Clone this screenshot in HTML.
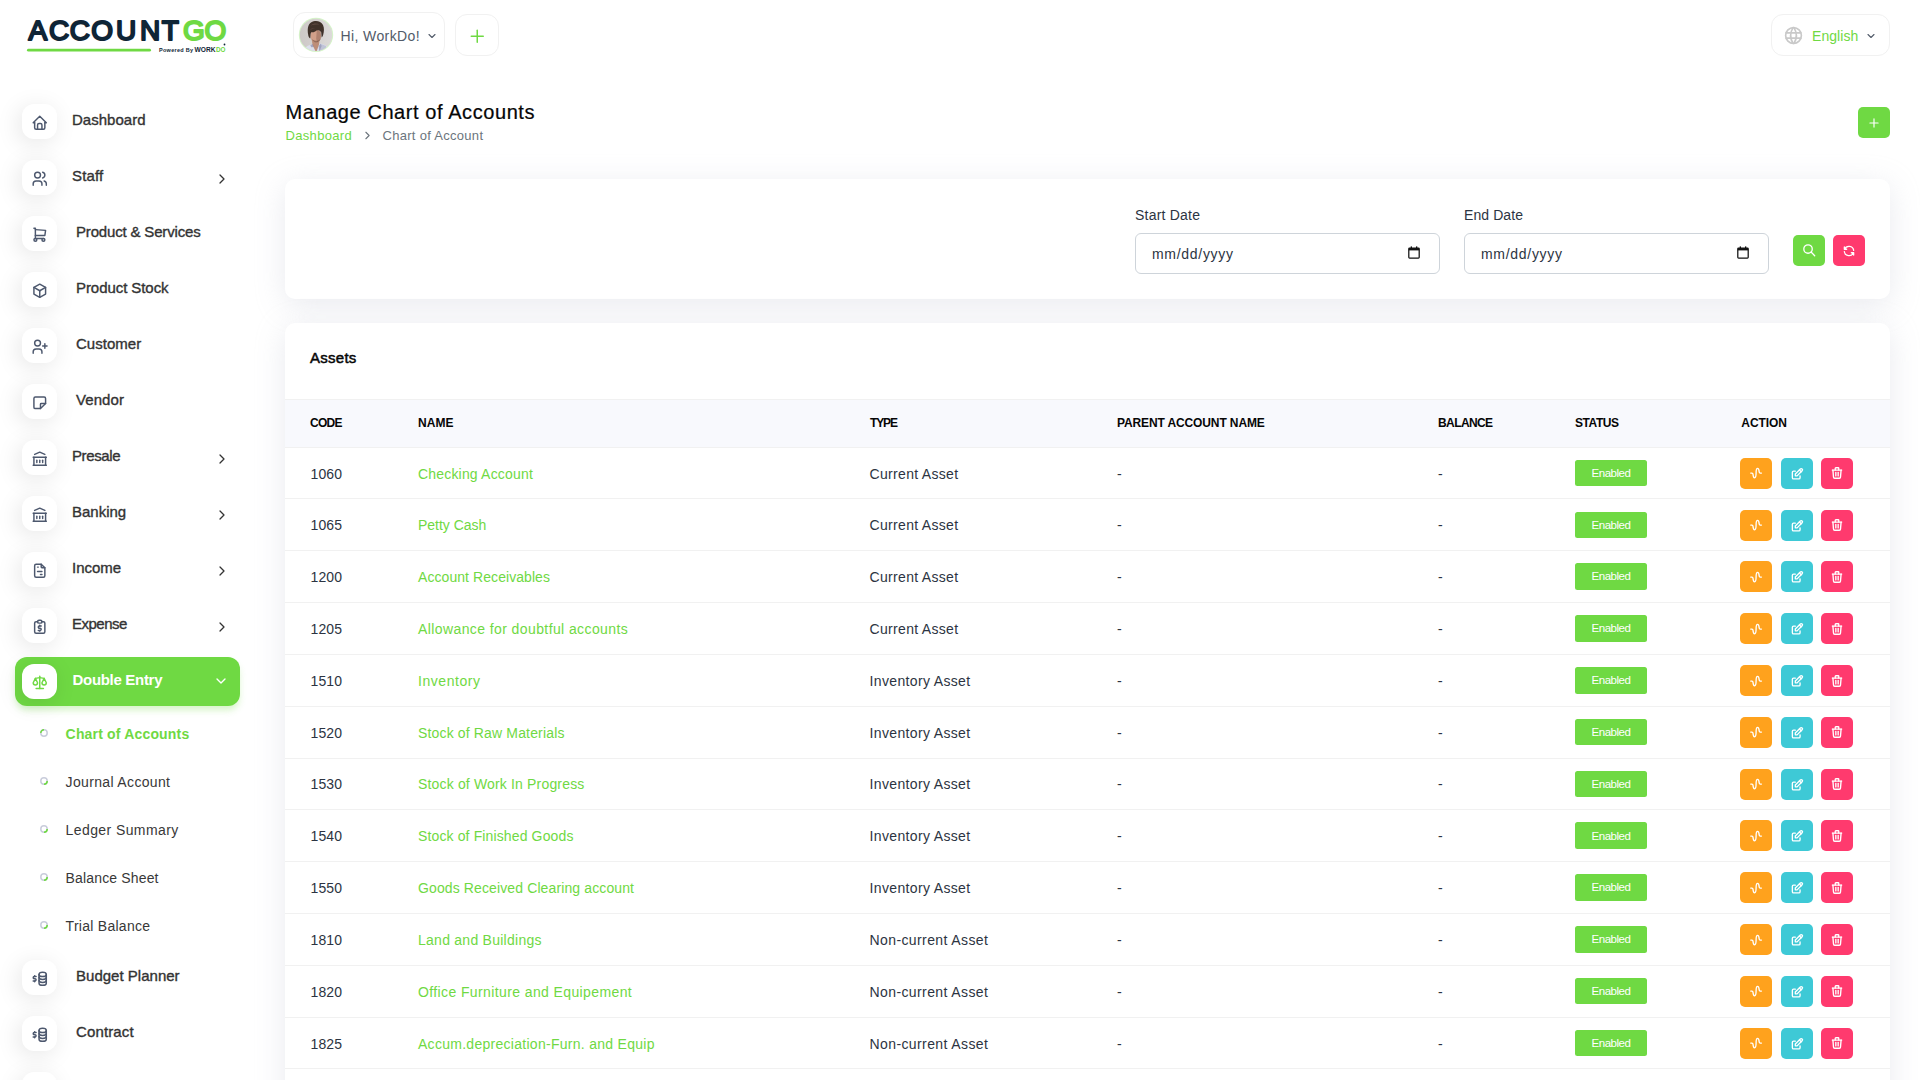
<!DOCTYPE html>
<html lang="en"><head><meta charset="utf-8"><title>Manage Chart of Accounts</title><style>
html,body{margin:0;padding:0}
body{width:1920px;height:1080px;overflow:hidden;background:#fff;font-family:"Liberation Sans",sans-serif;position:relative}
.t{position:absolute;white-space:pre;display:block;margin:0;padding:0;text-decoration:none}
.b{position:absolute;display:block;box-sizing:border-box}
</style></head><body>
<aside>
<svg class="b" style="left:20px;top:10px" width="220" height="50" viewBox="0 0 220 50">
<text x="8.38 29.12 49.78 71.32 95.88 119.93 141.78" y="29.6" font-family="Liberation Sans, sans-serif" font-size="28" fill="#0f2536" stroke="#0f2536" stroke-width="2" stroke-linejoin="round">ACCOUNT</text>
<text x="162.98 184.48" y="29.6" font-family="Liberation Sans, sans-serif" font-size="28" fill="#6fd943" stroke="#6fd943" stroke-width="2" stroke-linejoin="round">GO</text>
<rect x="7" y="38.8" width="124" height="2.8" rx="1.4" fill="#6fd943"/>
<text x="139" y="41.5" font-family="Liberation Sans, sans-serif" font-weight="700" font-size="5.5" fill="#0f2536" textLength="34" lengthAdjust="spacing">Powered By</text>
<text x="174.5" y="41.8" font-family="Liberation Sans, sans-serif" font-weight="700" font-size="7" fill="#0f2536" textLength="21" lengthAdjust="spacingAndGlyphs">WORK</text>
<text x="196" y="41.8" font-family="Liberation Sans, sans-serif" font-weight="700" font-size="7" fill="#6fd943" textLength="9.5" lengthAdjust="spacingAndGlyphs">DO</text>
<circle cx="204.5" cy="34.5" r="0.9" fill="#0f2536"/>
</svg>
<nav>
<div class="b" style="left:22px;top:104px;width:35px;height:35px;background:#fff;border-radius:12px;box-shadow:-3px 4px 23px rgba(0,0,0,.1);"></div>
<svg class="b" style="left:30.85px;top:113.55px" width="17.5" height="17.5" viewBox="0 0 24 24" fill="none" stroke="#4d586e" stroke-width="2" stroke-linecap="round" stroke-linejoin="round"><path d="M5 12l-2 0l9 -9l9 9l-2 0"/><path d="M5 12v7a2 2 0 0 0 2 2h10a2 2 0 0 0 2 -2v-7"/><path d="M9 21v-6a2 2 0 0 1 2 -2h2a2 2 0 0 1 2 2v6"/></svg>
<a class="t" style="left:72.00px;top:108.50px;font-size:15px;line-height:22px;color:#333;letter-spacing:0.026px;-webkit-text-stroke:0.36px #333;">Dashboard</a>
<div class="b" style="left:22px;top:160px;width:35px;height:35px;background:#fff;border-radius:12px;box-shadow:-3px 4px 23px rgba(0,0,0,.1);"></div>
<svg class="b" style="left:30.85px;top:169.55px" width="17.5" height="17.5" viewBox="0 0 24 24" fill="none" stroke="#4d586e" stroke-width="2" stroke-linecap="round" stroke-linejoin="round"><path d="M9 7m-4 0a4 4 0 1 0 8 0a4 4 0 1 0 -8 0"/><path d="M3 21v-2a4 4 0 0 1 4 -4h4a4 4 0 0 1 4 4v2"/><path d="M16 3.13a4 4 0 0 1 0 7.75"/><path d="M21 21v-2a4 4 0 0 0 -3 -3.85"/></svg>
<a class="t" style="left:72.00px;top:164.50px;font-size:15px;line-height:22px;color:#333;letter-spacing:0.177px;-webkit-text-stroke:0.36px #333;">Staff</a>
<svg class="b" style="left:214.00px;top:170.80px" width="16" height="16" viewBox="0 0 24 24" fill="none" stroke="#333" stroke-width="1.9" stroke-linecap="round" stroke-linejoin="round"><path d="M9 6l6 6l-6 6"/></svg>
<div class="b" style="left:22px;top:216px;width:35px;height:35px;background:#fff;border-radius:12px;box-shadow:-3px 4px 23px rgba(0,0,0,.1);"></div>
<svg class="b" style="left:30.85px;top:225.55px" width="17.5" height="17.5" viewBox="0 0 24 24" fill="none" stroke="#4d586e" stroke-width="2" stroke-linecap="round" stroke-linejoin="round"><path d="M6 19m-2 0a2 2 0 1 0 4 0a2 2 0 1 0 -4 0"/><path d="M17 19m-2 0a2 2 0 1 0 4 0a2 2 0 1 0 -4 0"/><path d="M17 17h-11v-14h-2"/><path d="M6 5l14 1l-1 7h-13"/></svg>
<a class="t" style="left:76.00px;top:220.50px;font-size:15px;line-height:22px;color:#333;letter-spacing:-0.168px;-webkit-text-stroke:0.36px #333;">Product &amp; Services</a>
<div class="b" style="left:22px;top:272px;width:35px;height:35px;background:#fff;border-radius:12px;box-shadow:-3px 4px 23px rgba(0,0,0,.1);"></div>
<svg class="b" style="left:30.85px;top:281.55px" width="17.5" height="17.5" viewBox="0 0 24 24" fill="none" stroke="#4d586e" stroke-width="2" stroke-linecap="round" stroke-linejoin="round"><path d="M12 3l8 4.5l0 9l-8 4.5l-8 -4.5l0 -9l8 -4.5"/><path d="M12 12l8 -4.5"/><path d="M12 12l0 9"/><path d="M12 12l-8 -4.5"/></svg>
<a class="t" style="left:76.00px;top:276.50px;font-size:15px;line-height:22px;color:#333;letter-spacing:-0.066px;-webkit-text-stroke:0.36px #333;">Product Stock</a>
<div class="b" style="left:22px;top:328px;width:35px;height:35px;background:#fff;border-radius:12px;box-shadow:-3px 4px 23px rgba(0,0,0,.1);"></div>
<svg class="b" style="left:30.85px;top:337.55px" width="17.5" height="17.5" viewBox="0 0 24 24" fill="none" stroke="#4d586e" stroke-width="2" stroke-linecap="round" stroke-linejoin="round"><path d="M9 7m-4 0a4 4 0 1 0 8 0a4 4 0 1 0 -8 0"/><path d="M3 21v-2a4 4 0 0 1 4 -4h4a4 4 0 0 1 4 4v2"/><path d="M16 11h6m-3 -3v6"/></svg>
<a class="t" style="left:76.00px;top:332.50px;font-size:15px;line-height:22px;color:#333;letter-spacing:0.024px;-webkit-text-stroke:0.36px #333;">Customer</a>
<div class="b" style="left:22px;top:384px;width:35px;height:35px;background:#fff;border-radius:12px;box-shadow:-3px 4px 23px rgba(0,0,0,.1);"></div>
<svg class="b" style="left:30.85px;top:393.55px" width="17.5" height="17.5" viewBox="0 0 24 24" fill="none" stroke="#4d586e" stroke-width="2" stroke-linecap="round" stroke-linejoin="round"><path d="M13 20l7 -7"/><path d="M13 20v-6a1 1 0 0 1 1 -1h6v-7a2 2 0 0 0 -2 -2h-12a2 2 0 0 0 -2 2v12a2 2 0 0 0 2 2h7"/></svg>
<a class="t" style="left:76.00px;top:388.50px;font-size:15px;line-height:22px;color:#333;letter-spacing:0.071px;-webkit-text-stroke:0.36px #333;">Vendor</a>
<div class="b" style="left:22px;top:440px;width:35px;height:35px;background:#fff;border-radius:12px;box-shadow:-3px 4px 23px rgba(0,0,0,.1);"></div>
<svg class="b" style="left:30.85px;top:449.55px" width="17.5" height="17.5" viewBox="0 0 24 24" fill="none" stroke="#4d586e" stroke-width="2" stroke-linecap="round" stroke-linejoin="round"><path d="M3 21l18 0"/><path d="M3 10l18 0"/><path d="M5 6l7 -3l7 3"/><path d="M4 10l0 11"/><path d="M20 10l0 11"/><path d="M8 14l0 3"/><path d="M12 14l0 3"/><path d="M16 14l0 3"/></svg>
<a class="t" style="left:72.00px;top:444.50px;font-size:15px;line-height:22px;color:#333;letter-spacing:-0.393px;-webkit-text-stroke:0.36px #333;">Presale</a>
<svg class="b" style="left:214.00px;top:450.80px" width="16" height="16" viewBox="0 0 24 24" fill="none" stroke="#333" stroke-width="1.9" stroke-linecap="round" stroke-linejoin="round"><path d="M9 6l6 6l-6 6"/></svg>
<div class="b" style="left:22px;top:496px;width:35px;height:35px;background:#fff;border-radius:12px;box-shadow:-3px 4px 23px rgba(0,0,0,.1);"></div>
<svg class="b" style="left:30.85px;top:505.55px" width="17.5" height="17.5" viewBox="0 0 24 24" fill="none" stroke="#4d586e" stroke-width="2" stroke-linecap="round" stroke-linejoin="round"><path d="M3 21l18 0"/><path d="M3 10l18 0"/><path d="M5 6l7 -3l7 3"/><path d="M4 10l0 11"/><path d="M20 10l0 11"/><path d="M8 14l0 3"/><path d="M12 14l0 3"/><path d="M16 14l0 3"/></svg>
<a class="t" style="left:72.00px;top:500.50px;font-size:15px;line-height:22px;color:#333;letter-spacing:-0.003px;-webkit-text-stroke:0.36px #333;">Banking</a>
<svg class="b" style="left:214.00px;top:506.80px" width="16" height="16" viewBox="0 0 24 24" fill="none" stroke="#333" stroke-width="1.9" stroke-linecap="round" stroke-linejoin="round"><path d="M9 6l6 6l-6 6"/></svg>
<div class="b" style="left:22px;top:552px;width:35px;height:35px;background:#fff;border-radius:12px;box-shadow:-3px 4px 23px rgba(0,0,0,.1);"></div>
<svg class="b" style="left:30.85px;top:561.55px" width="17.5" height="17.5" viewBox="0 0 24 24" fill="none" stroke="#4d586e" stroke-width="2" stroke-linecap="round" stroke-linejoin="round"><path d="M14 3v4a1 1 0 0 0 1 1h4"/><path d="M17 21h-10a2 2 0 0 1 -2 -2v-14a2 2 0 0 1 2 -2h7l5 5v11a2 2 0 0 1 -2 2z"/><path d="M9 7l1 0"/><path d="M9 13l6 0"/><path d="M13 17l2 0"/></svg>
<a class="t" style="left:72.00px;top:556.50px;font-size:15px;line-height:22px;color:#333;letter-spacing:-0.021px;-webkit-text-stroke:0.36px #333;">Income</a>
<svg class="b" style="left:214.00px;top:562.80px" width="16" height="16" viewBox="0 0 24 24" fill="none" stroke="#333" stroke-width="1.9" stroke-linecap="round" stroke-linejoin="round"><path d="M9 6l6 6l-6 6"/></svg>
<div class="b" style="left:22px;top:608px;width:35px;height:35px;background:#fff;border-radius:12px;box-shadow:-3px 4px 23px rgba(0,0,0,.1);"></div>
<svg class="b" style="left:30.85px;top:617.55px" width="17.5" height="17.5" viewBox="0 0 24 24" fill="none" stroke="#4d586e" stroke-width="2" stroke-linecap="round" stroke-linejoin="round"><path d="M9 5h-2a2 2 0 0 0 -2 2v12a2 2 0 0 0 2 2h10a2 2 0 0 0 2 -2v-12a2 2 0 0 0 -2 -2h-2"/><path d="M9 5a2 2 0 0 1 2 -2h2a2 2 0 0 1 2 2a2 2 0 0 1 -2 2h-2a2 2 0 0 1 -2 -2z"/><path d="M14 11h-2.5a1.5 1.5 0 0 0 0 3h1a1.5 1.5 0 0 1 0 3h-2.5"/><path d="M12 17v1m0 -8v1"/></svg>
<a class="t" style="left:72.00px;top:612.50px;font-size:15px;line-height:22px;color:#333;letter-spacing:-0.496px;-webkit-text-stroke:0.36px #333;">Expense</a>
<svg class="b" style="left:214.00px;top:618.80px" width="16" height="16" viewBox="0 0 24 24" fill="none" stroke="#333" stroke-width="1.9" stroke-linecap="round" stroke-linejoin="round"><path d="M9 6l6 6l-6 6"/></svg>
<div class="b" style="left:15px;top:657px;width:225px;height:49px;background:#6fd943;border-radius:12px;box-shadow:0 5px 7px -1px rgba(111,217,67,.3);"></div>
<div class="b" style="left:22px;top:664px;width:35px;height:35px;background:#fff;border-radius:12px;box-shadow:-3px 4px 23px rgba(0,0,0,.1);"></div>
<svg class="b" style="left:30.85px;top:673.55px" width="17.5" height="17.5" viewBox="0 0 24 24" fill="none" stroke="#6fd943" stroke-width="2" stroke-linecap="round" stroke-linejoin="round"><path d="M7 20l10 0"/><path d="M6 6l6 -1l6 1"/><path d="M12 3l0 17"/><path d="M9 12l-3 -6l-3 6a3 3 0 0 0 6 0"/><path d="M21 12l-3 -6l-3 6a3 3 0 0 0 6 0"/></svg>
<a class="t" style="left:72.50px;top:668.50px;font-size:15px;line-height:22px;color:#fff;font-weight:700;letter-spacing:-0.304px;">Double Entry</a>
<svg class="b" style="left:212.50px;top:673.30px" width="16" height="16" viewBox="0 0 24 24" fill="none" stroke="#fff" stroke-width="2" stroke-linecap="round" stroke-linejoin="round"><path d="M6 9l6 6l6 -6"/></svg>
<svg class="b" style="left:39px;top:728px" width="10" height="10" viewBox="0 0 10 10" fill="none"><circle cx="5" cy="5" r="3.2" stroke="#c9cddb" stroke-width="1.5"/><path d="M1.8 5a3.2 3.2 0 0 1 3.2 -3.2" stroke="#6fd943" stroke-width="1.5"/></svg>
<a class="t" style="left:65.60px;top:723.50px;font-size:14px;line-height:21px;color:#6fd943;font-weight:700;letter-spacing:0.173px;">Chart of Accounts</a>
<svg class="b" style="left:39px;top:776px" width="10" height="10" viewBox="0 0 10 10" fill="none"><circle cx="5" cy="5" r="3.2" stroke="#c9cddb" stroke-width="1.5"/><path d="M8.200 5a3.200 3.200 0 0 1 -3.200 3.200" stroke="#6fd943" stroke-width="1.5"/></svg>
<a class="t" style="left:65.60px;top:771.50px;font-size:14px;line-height:21px;color:#383838;letter-spacing:0.341px;">Journal Account</a>
<svg class="b" style="left:39px;top:824px" width="10" height="10" viewBox="0 0 10 10" fill="none"><circle cx="5" cy="5" r="3.2" stroke="#c9cddb" stroke-width="1.5"/><path d="M8.200 5a3.200 3.200 0 0 1 -3.200 3.200" stroke="#6fd943" stroke-width="1.5"/></svg>
<a class="t" style="left:65.60px;top:819.50px;font-size:14px;line-height:21px;color:#383838;letter-spacing:0.408px;">Ledger Summary</a>
<svg class="b" style="left:39px;top:872px" width="10" height="10" viewBox="0 0 10 10" fill="none"><circle cx="5" cy="5" r="3.2" stroke="#c9cddb" stroke-width="1.5"/><path d="M8.200 5a3.200 3.200 0 0 1 -3.200 3.200" stroke="#6fd943" stroke-width="1.5"/></svg>
<a class="t" style="left:65.60px;top:867.50px;font-size:14px;line-height:21px;color:#383838;letter-spacing:0.152px;">Balance Sheet</a>
<svg class="b" style="left:39px;top:920px" width="10" height="10" viewBox="0 0 10 10" fill="none"><circle cx="5" cy="5" r="3.2" stroke="#c9cddb" stroke-width="1.5"/><path d="M8.200 5a3.200 3.200 0 0 1 -3.200 3.200" stroke="#6fd943" stroke-width="1.5"/></svg>
<a class="t" style="left:65.60px;top:915.50px;font-size:14px;line-height:21px;color:#383838;letter-spacing:0.268px;">Trial Balance</a>
<div class="b" style="left:22px;top:960px;width:35px;height:35px;background:#fff;border-radius:12px;box-shadow:-3px 4px 23px rgba(0,0,0,.1);"></div>
<svg class="b" style="left:30.85px;top:969.55px" width="17.5" height="17.5" viewBox="0 0 24 24" fill="none" stroke="#4d586e" stroke-width="2" stroke-linecap="round" stroke-linejoin="round"><path d="M16 6m-5 0a5 3 0 1 0 10 0a5 3 0 1 0 -10 0"/><path d="M11 6v4c0 1.657 2.239 3 5 3s5 -1.343 5 -3v-4"/><path d="M11 10v4c0 1.657 2.239 3 5 3s5 -1.343 5 -3v-4"/><path d="M11 14v4c0 1.657 2.239 3 5 3s5 -1.343 5 -3v-4"/><path d="M7 9h-2.5a1.5 1.5 0 0 0 0 3h1a1.5 1.5 0 0 1 0 3h-2.5"/><path d="M5 15v1m0 -8v1"/></svg>
<a class="t" style="left:76.00px;top:964.50px;font-size:15px;line-height:22px;color:#333;letter-spacing:0.014px;-webkit-text-stroke:0.36px #333;">Budget Planner</a>
<div class="b" style="left:22px;top:1016px;width:35px;height:35px;background:#fff;border-radius:12px;box-shadow:-3px 4px 23px rgba(0,0,0,.1);"></div>
<svg class="b" style="left:30.85px;top:1025.55px" width="17.5" height="17.5" viewBox="0 0 24 24" fill="none" stroke="#4d586e" stroke-width="2" stroke-linecap="round" stroke-linejoin="round"><path d="M16 6m-5 0a5 3 0 1 0 10 0a5 3 0 1 0 -10 0"/><path d="M11 6v4c0 1.657 2.239 3 5 3s5 -1.343 5 -3v-4"/><path d="M11 10v4c0 1.657 2.239 3 5 3s5 -1.343 5 -3v-4"/><path d="M11 14v4c0 1.657 2.239 3 5 3s5 -1.343 5 -3v-4"/><path d="M7 9h-2.5a1.5 1.5 0 0 0 0 3h1a1.5 1.5 0 0 1 0 3h-2.5"/><path d="M5 15v1m0 -8v1"/></svg>
<a class="t" style="left:76.00px;top:1020.50px;font-size:15px;line-height:22px;color:#333;letter-spacing:0.128px;-webkit-text-stroke:0.36px #333;">Contract</a>
<div class="b" style="left:22px;top:1072px;width:35px;height:35px;background:#fff;border-radius:12px;box-shadow:-3px 4px 23px rgba(0,0,0,.1);"></div>
</nav></aside>
<header>
<div class="b" style="left:293px;top:12px;width:152px;height:46px;border:1px solid #f1f1f1;border-radius:12px;background:#fff"></div>
<svg class="b" style="left:296px;top:15px" width="40" height="40" viewBox="296 15 40 40">
<defs><clipPath id="av"><circle cx="316" cy="34.9" r="16.2"/></clipPath><filter id="bl" x="-20%" y="-20%" width="140%" height="140%"><feGaussianBlur stdDeviation="0.6"/></filter>
<linearGradient id="abg" x1="0" x2="1" y1="0" y2="0"><stop offset="0" stop-color="#cbc6c4"/><stop offset="1" stop-color="#dedcdb"/></linearGradient></defs>
<circle cx="316" cy="34.9" r="17.2" fill="#d5f4c8"/>
<g clip-path="url(#av)"><rect x="296" y="15" width="40" height="40" fill="url(#abg)"/>
<g filter="url(#bl)">
<path d="M302 52C304 47 308.500 45.200 312 44.200L315.800 52 319.800 43.200C324 44.200 329 46.500 331 52L331 56 302 56Z" fill="#dcdfec"/>
<path d="M321 44L326 46 327 53 320 53Z" fill="#b4b8cf" opacity=".7"/>
<path d="M311.800 40L319.600 40 319 44.500 316.200 52.500 312.600 45Z" fill="#bd8d78"/>
<path d="M310.300 45.200L312.600 44 313.800 47 311.300 47.300Z M318.700 46L320.600 43.600 321.500 46 319.300 53Z" fill="#6f729c" opacity=".5"/>
<ellipse cx="315.700" cy="35.800" rx="5.300" ry="6.500" fill="#d2a08a"/>
<path d="M316.800 29.500L321.200 31 320.800 39 317.300 42.300 316.200 39Z" fill="#94695a" opacity=".55"/>
<path d="M311.300 38.500C312.500 41.500 315 42.800 317.300 42.300 319 41.600 320.300 40 320.800 38.500 319.500 40.300 317.500 41 315.800 40.800 314 40.600 312.300 39.800 311.300 38.500Z" fill="#7d5848" opacity=".7"/>
<path d="M308.300 35.500C306.800 28 308.300 22.500 313.500 21.300 317 20.300 321.200 21.300 323 25 324.500 28 324 32 323.200 34.800 322.800 36.300 322.300 37 321.600 37.500L321.200 32.200C319.800 30.300 318.200 29.800 316.500 30.600 315 32.300 312.800 32.600 311.300 32.200 310.800 33 310.500 34 310.500 35L310.300 38.600C309.200 37.800 308.600 36.800 308.300 35.500Z" fill="#41322c"/>
<path d="M311 25.500C313 23.300 317 23 319.500 24.500 317.500 24.300 314 24.500 311 25.500Z M310 30C311 28.500 313 27.800 315 28 313 28.600 311.300 29.300 310 30Z" fill="#6a5347" opacity=".7"/>
</g></g></svg>
<span class="t" style="left:340.60px;top:25.50px;font-size:14px;line-height:21px;color:#525b69;letter-spacing:0.380px;">Hi, WorkDo!</span>
<svg class="b" style="left:426.00px;top:29.70px" width="12" height="12" viewBox="0 0 24 24" fill="none" stroke="#525b69" stroke-width="2.2" stroke-linecap="round" stroke-linejoin="round"><path d="M6 9l6 6l6 -6"/></svg>
<div class="b" style="left:455px;top:14px;width:43.5px;height:41.5px;border:1px solid #f1f1f1;border-radius:12px;background:#fff"></div>
<svg class="b" style="left:466.85px;top:25.55px" width="20.5" height="20.5" viewBox="0 0 24 24" fill="none" stroke="#6fd943" stroke-width="1.75" stroke-linecap="round" stroke-linejoin="round"><path d="M12 5l0 14"/><path d="M5 12l14 0"/></svg>
<div class="b" style="left:1771px;top:14px;width:119px;height:41.5px;border:1px solid #f1f1f1;border-radius:12px;background:#fff"></div>
<svg class="b" style="left:1782.90px;top:25.30px" width="21" height="21" viewBox="0 0 24 24" fill="none" stroke="#c9c9c9" stroke-width="1.9" stroke-linecap="round" stroke-linejoin="round"><path d="M3 12a9 9 0 1 0 18 0a9 9 0 0 0 -18 0"/><path d="M3.6 9h16.8"/><path d="M3.6 15h16.8"/><path d="M11.5 3a17 17 0 0 0 0 18"/><path d="M12.5 3a17 17 0 0 1 0 18"/></svg>
<span class="t" style="left:1812.00px;top:25.50px;font-size:14px;line-height:21px;color:#6fd943;letter-spacing:0.063px;">English</span>
<svg class="b" style="left:1865.00px;top:29.50px" width="12" height="12" viewBox="0 0 24 24" fill="none" stroke="#525b69" stroke-width="2.2" stroke-linecap="round" stroke-linejoin="round"><path d="M6 9l6 6l6 -6"/></svg>
</header>
<main>
<h4 class="t" style="left:285.50px;top:97.00px;font-size:20px;line-height:30px;color:#060606;font-weight:400;letter-spacing:0.578px;-webkit-text-stroke:0.22px #060606;">Manage Chart of Accounts</h4>
<a class="t" style="left:285.50px;top:125.50px;font-size:13px;line-height:20px;color:#6fd943;letter-spacing:0.324px;">Dashboard</a>
<svg class="b" style="left:360.70px;top:129.10px" width="13" height="13" viewBox="0 0 24 24" fill="none" stroke="#6c757d" stroke-width="2.1" stroke-linecap="round" stroke-linejoin="round"><path d="M9 6l6 6l-6 6"/></svg>
<span class="t" style="left:382.50px;top:125.50px;font-size:13px;line-height:20px;color:#6c757d;letter-spacing:0.292px;">Chart of Account</span>
<div class="b" style="left:1858px;top:107px;width:32px;height:31px;background:#6fd943;border-radius:5px"></div>
<svg class="b" style="left:1867.00px;top:115.60px" width="14" height="14" viewBox="0 0 24 24" fill="none" stroke="#fff" stroke-width="2" stroke-linecap="round" stroke-linejoin="round"><path d="M12 5l0 14"/><path d="M5 12l14 0"/></svg>
<section>
<div class="b" style="left:285px;top:179px;width:1605px;height:120px;background:#fff;border-radius:10px;box-shadow:0 6px 30px rgba(182,186,203,.3);"></div>
<label class="t" style="left:1135.00px;top:204.50px;font-size:14px;line-height:21px;color:#2c3442;letter-spacing:0.219px;">Start Date</label>
<div class="b" style="left:1135px;top:233px;width:305px;height:40.5px;border:1px solid #ced4da;border-radius:6px;background:#fff"></div>
<span class="t" style="left:1152.00px;top:243.50px;font-size:14px;line-height:21px;color:#2c3442;letter-spacing:0.701px;">mm/dd/yyyy</span>
<label class="t" style="left:1464.00px;top:204.50px;font-size:14px;line-height:21px;color:#2c3442;letter-spacing:0.089px;">End Date</label>
<div class="b" style="left:1464px;top:233px;width:305px;height:40.5px;border:1px solid #ced4da;border-radius:6px;background:#fff"></div>
<span class="t" style="left:1481.00px;top:243.50px;font-size:14px;line-height:21px;color:#2c3442;letter-spacing:0.701px;">mm/dd/yyyy</span>
<svg class="b" style="left:1408px;top:245.7px" width="12" height="13" viewBox="0 0 12 13"><rect x="0.8" y="2.1" width="10.4" height="10" rx="0.8" fill="none" stroke="#111" stroke-width="1.25"/><rect x="0.8" y="2.1" width="10.4" height="2.3" fill="#111"/><rect x="2.7" y="0.4" width="1.3" height="2.2" fill="#111"/><rect x="8" y="0.4" width="1.3" height="2.2" fill="#111"/></svg>
<svg class="b" style="left:1737px;top:245.7px" width="12" height="13" viewBox="0 0 12 13"><rect x="0.8" y="2.1" width="10.4" height="10" rx="0.8" fill="none" stroke="#111" stroke-width="1.25"/><rect x="0.8" y="2.1" width="10.4" height="2.3" fill="#111"/><rect x="2.7" y="0.4" width="1.3" height="2.2" fill="#111"/><rect x="8" y="0.4" width="1.3" height="2.2" fill="#111"/></svg>
<div class="b" style="left:1793px;top:235px;width:32px;height:30.5px;background:#6fd943;border-radius:5px"></div>
<svg class="b" style="left:1801.95px;top:243.25px" width="14.5" height="14.5" viewBox="0 0 24 24" fill="none" stroke="#fff" stroke-width="2.2" stroke-linecap="round" stroke-linejoin="round"><path d="M10 10m-7 0a7 7 0 1 0 14 0a7 7 0 1 0 -14 0"/><path d="M21 21l-6 -6"/></svg>
<div class="b" style="left:1833px;top:235px;width:32px;height:30.5px;background:#ff3a6e;border-radius:5px"></div>
<svg class="b" style="left:1842.00px;top:243.50px" width="14" height="14" viewBox="0 0 24 24" fill="none" stroke="#fff" stroke-width="2.2" stroke-linecap="round" stroke-linejoin="round"><path d="M20 11a8.1 8.1 0 0 0 -15.5 -2m-.5 -4v4h4"/><path d="M4 13a8.1 8.1 0 0 0 15.5 2m.5 4v-4h-4"/></svg>
</section>
<section>
<div class="b" style="left:285px;top:323px;width:1605px;height:800px;background:#fff;border-radius:10px 10px 0 0;box-shadow:0 6px 30px rgba(182,186,203,.3);"></div>
<h5 class="t" style="left:310.00px;top:346.50px;font-size:15px;line-height:22px;color:#060606;font-weight:400;letter-spacing:0.257px;-webkit-text-stroke:0.5px #060606;">Assets</h5>
<div class="b" style="left:285px;top:398.5px;width:1605px;height:49.5px;background:#f8f9fd;border-top:1px solid #f1f1f1;border-bottom:1px solid #f1f1f1"></div>
<span class="t" style="left:310.00px;top:414.00px;font-size:12px;line-height:18px;color:#060606;font-weight:700;letter-spacing:-0.724px;">CODE</span>
<span class="t" style="left:418.00px;top:414.00px;font-size:12px;line-height:18px;color:#060606;font-weight:700;letter-spacing:0.052px;">NAME</span>
<span class="t" style="left:870.00px;top:414.00px;font-size:12px;line-height:18px;color:#060606;font-weight:700;letter-spacing:-1.115px;">TYPE</span>
<span class="t" style="left:1117.00px;top:414.00px;font-size:12px;line-height:18px;color:#060606;font-weight:700;letter-spacing:-0.122px;">PARENT ACCOUNT NAME</span>
<span class="t" style="left:1438.00px;top:414.00px;font-size:12px;line-height:18px;color:#060606;font-weight:700;letter-spacing:-0.595px;">BALANCE</span>
<span class="t" style="left:1575.00px;top:414.00px;font-size:12px;line-height:18px;color:#060606;font-weight:700;letter-spacing:-0.444px;">STATUS</span>
<span class="t" style="left:1741.30px;top:414.00px;font-size:12px;line-height:18px;color:#060606;font-weight:700;letter-spacing:-0.060px;">ACTION</span>
<span class="t" style="left:310.50px;top:463.50px;font-size:14px;line-height:21px;color:#2c3442;letter-spacing:0.115px;">1060</span>
<a class="t" style="left:418.00px;top:463.50px;font-size:14px;line-height:21px;color:#6fd943;letter-spacing:0.181px;">Checking Account</a>
<span class="t" style="left:869.60px;top:463.50px;font-size:14px;line-height:21px;color:#2c3442;letter-spacing:0.306px;">Current Asset</span>
<span class="t" style="left:1117.00px;top:463.50px;font-size:14px;line-height:21px;color:#2c3442;">-</span>
<span class="t" style="left:1438.00px;top:463.50px;font-size:14px;line-height:21px;color:#2c3442;">-</span>
<div class="b" style="left:1575px;top:459.8px;width:72px;height:26.5px;background:#6fd943;border-radius:2.5px"></div>
<span class="t" style="left:1591.50px;top:464.50px;font-size:11.5px;line-height:17px;color:#fff;letter-spacing:-0.470px;">Enabled</span>
<div class="b" style="left:1740px;top:457.5px;width:32px;height:31px;background:#ffa21d;border-radius:5px"></div>
<svg class="b" style="left:1748.80px;top:466.10px" width="14.2" height="14.2" viewBox="0 0 24 24" fill="none" stroke="#fff" stroke-width="2.3" stroke-linecap="round" stroke-linejoin="round"><path d="M21 12h-2c-.894 0 -1.662 -.857 -1.761 -2c-.296 -3.45 -.749 -6 -2.749 -6s-2.5 3.582 -2.5 8s-.5 8 -2.5 8s-2.452 -2.547 -2.749 -6c-.1 -1.147 -.867 -2 -1.763 -2h-2"/></svg>
<div class="b" style="left:1781px;top:457.5px;width:32px;height:31px;background:#3ec9d6;border-radius:5px"></div>
<svg class="b" style="left:1789.90px;top:466.50px" width="14.2" height="14.2" viewBox="0 0 24 24" fill="none" stroke="#fff" stroke-width="2.3" stroke-linecap="round" stroke-linejoin="round"><path d="M9 7h-3a2 2 0 0 0 -2 2v9a2 2 0 0 0 2 2h9a2 2 0 0 0 2 -2v-3"/><path d="M9 15h3l8.5 -8.5a1.5 1.5 0 0 0 -3 -3l-8.5 8.5v3"/><path d="M16 5l3 3"/></svg>
<div class="b" style="left:1821px;top:457.5px;width:32px;height:31px;background:#ff3a6e;border-radius:5px"></div>
<svg class="b" style="left:1830.30px;top:466.30px" width="14" height="14" viewBox="0 0 24 24" fill="none" stroke="#fff" stroke-width="2.3" stroke-linecap="round" stroke-linejoin="round"><path d="M4 7l16 0"/><path d="M10 11l0 6"/><path d="M14 11l0 6"/><path d="M5 7l1 12a2 2 0 0 0 2 2h8a2 2 0 0 0 2 -2l1 -12"/><path d="M9 7v-3a1 1 0 0 1 1 -1h4a1 1 0 0 1 1 1v3"/></svg>
<div class="b" style="left:285px;top:498px;width:1605px;height:1px;background:#f1f1f1"></div>
<span class="t" style="left:310.50px;top:514.50px;font-size:14px;line-height:21px;color:#2c3442;letter-spacing:0.115px;">1065</span>
<a class="t" style="left:418.00px;top:514.50px;font-size:14px;line-height:21px;color:#6fd943;letter-spacing:-0.009px;">Petty Cash</a>
<span class="t" style="left:869.60px;top:514.50px;font-size:14px;line-height:21px;color:#2c3442;letter-spacing:0.306px;">Current Asset</span>
<span class="t" style="left:1117.00px;top:514.50px;font-size:14px;line-height:21px;color:#2c3442;">-</span>
<span class="t" style="left:1438.00px;top:514.50px;font-size:14px;line-height:21px;color:#2c3442;">-</span>
<div class="b" style="left:1575px;top:511.6px;width:72px;height:26.5px;background:#6fd943;border-radius:2.5px"></div>
<span class="t" style="left:1591.50px;top:516.50px;font-size:11.5px;line-height:17px;color:#fff;letter-spacing:-0.470px;">Enabled</span>
<div class="b" style="left:1740px;top:509.5px;width:32px;height:31px;background:#ffa21d;border-radius:5px"></div>
<svg class="b" style="left:1748.80px;top:518.10px" width="14.2" height="14.2" viewBox="0 0 24 24" fill="none" stroke="#fff" stroke-width="2.3" stroke-linecap="round" stroke-linejoin="round"><path d="M21 12h-2c-.894 0 -1.662 -.857 -1.761 -2c-.296 -3.45 -.749 -6 -2.749 -6s-2.5 3.582 -2.5 8s-.5 8 -2.5 8s-2.452 -2.547 -2.749 -6c-.1 -1.147 -.867 -2 -1.763 -2h-2"/></svg>
<div class="b" style="left:1781px;top:509.5px;width:32px;height:31px;background:#3ec9d6;border-radius:5px"></div>
<svg class="b" style="left:1789.90px;top:518.50px" width="14.2" height="14.2" viewBox="0 0 24 24" fill="none" stroke="#fff" stroke-width="2.3" stroke-linecap="round" stroke-linejoin="round"><path d="M9 7h-3a2 2 0 0 0 -2 2v9a2 2 0 0 0 2 2h9a2 2 0 0 0 2 -2v-3"/><path d="M9 15h3l8.5 -8.5a1.5 1.5 0 0 0 -3 -3l-8.5 8.5v3"/><path d="M16 5l3 3"/></svg>
<div class="b" style="left:1821px;top:509.5px;width:32px;height:31px;background:#ff3a6e;border-radius:5px"></div>
<svg class="b" style="left:1830.30px;top:518.30px" width="14" height="14" viewBox="0 0 24 24" fill="none" stroke="#fff" stroke-width="2.3" stroke-linecap="round" stroke-linejoin="round"><path d="M4 7l16 0"/><path d="M10 11l0 6"/><path d="M14 11l0 6"/><path d="M5 7l1 12a2 2 0 0 0 2 2h8a2 2 0 0 0 2 -2l1 -12"/><path d="M9 7v-3a1 1 0 0 1 1 -1h4a1 1 0 0 1 1 1v3"/></svg>
<div class="b" style="left:285px;top:550px;width:1605px;height:1px;background:#f1f1f1"></div>
<span class="t" style="left:310.50px;top:566.50px;font-size:14px;line-height:21px;color:#2c3442;letter-spacing:0.115px;">1200</span>
<a class="t" style="left:418.00px;top:566.50px;font-size:14px;line-height:21px;color:#6fd943;letter-spacing:0.069px;">Account Receivables</a>
<span class="t" style="left:869.60px;top:566.50px;font-size:14px;line-height:21px;color:#2c3442;letter-spacing:0.306px;">Current Asset</span>
<span class="t" style="left:1117.00px;top:566.50px;font-size:14px;line-height:21px;color:#2c3442;">-</span>
<span class="t" style="left:1438.00px;top:566.50px;font-size:14px;line-height:21px;color:#2c3442;">-</span>
<div class="b" style="left:1575px;top:563.4px;width:72px;height:26.5px;background:#6fd943;border-radius:2.5px"></div>
<span class="t" style="left:1591.50px;top:567.50px;font-size:11.5px;line-height:17px;color:#fff;letter-spacing:-0.470px;">Enabled</span>
<div class="b" style="left:1740px;top:561.0px;width:32px;height:31px;background:#ffa21d;border-radius:5px"></div>
<svg class="b" style="left:1748.80px;top:569.60px" width="14.2" height="14.2" viewBox="0 0 24 24" fill="none" stroke="#fff" stroke-width="2.3" stroke-linecap="round" stroke-linejoin="round"><path d="M21 12h-2c-.894 0 -1.662 -.857 -1.761 -2c-.296 -3.45 -.749 -6 -2.749 -6s-2.5 3.582 -2.5 8s-.5 8 -2.5 8s-2.452 -2.547 -2.749 -6c-.1 -1.147 -.867 -2 -1.763 -2h-2"/></svg>
<div class="b" style="left:1781px;top:561.0px;width:32px;height:31px;background:#3ec9d6;border-radius:5px"></div>
<svg class="b" style="left:1789.90px;top:570.00px" width="14.2" height="14.2" viewBox="0 0 24 24" fill="none" stroke="#fff" stroke-width="2.3" stroke-linecap="round" stroke-linejoin="round"><path d="M9 7h-3a2 2 0 0 0 -2 2v9a2 2 0 0 0 2 2h9a2 2 0 0 0 2 -2v-3"/><path d="M9 15h3l8.5 -8.5a1.5 1.5 0 0 0 -3 -3l-8.5 8.5v3"/><path d="M16 5l3 3"/></svg>
<div class="b" style="left:1821px;top:561.0px;width:32px;height:31px;background:#ff3a6e;border-radius:5px"></div>
<svg class="b" style="left:1830.30px;top:569.80px" width="14" height="14" viewBox="0 0 24 24" fill="none" stroke="#fff" stroke-width="2.3" stroke-linecap="round" stroke-linejoin="round"><path d="M4 7l16 0"/><path d="M10 11l0 6"/><path d="M14 11l0 6"/><path d="M5 7l1 12a2 2 0 0 0 2 2h8a2 2 0 0 0 2 -2l1 -12"/><path d="M9 7v-3a1 1 0 0 1 1 -1h4a1 1 0 0 1 1 1v3"/></svg>
<div class="b" style="left:285px;top:602px;width:1605px;height:1px;background:#f1f1f1"></div>
<span class="t" style="left:310.50px;top:618.50px;font-size:14px;line-height:21px;color:#2c3442;letter-spacing:0.115px;">1205</span>
<a class="t" style="left:418.00px;top:618.50px;font-size:14px;line-height:21px;color:#6fd943;letter-spacing:0.404px;">Allowance for doubtful accounts</a>
<span class="t" style="left:869.60px;top:618.50px;font-size:14px;line-height:21px;color:#2c3442;letter-spacing:0.306px;">Current Asset</span>
<span class="t" style="left:1117.00px;top:618.50px;font-size:14px;line-height:21px;color:#2c3442;">-</span>
<span class="t" style="left:1438.00px;top:618.50px;font-size:14px;line-height:21px;color:#2c3442;">-</span>
<div class="b" style="left:1575px;top:615.2px;width:72px;height:26.5px;background:#6fd943;border-radius:2.5px"></div>
<span class="t" style="left:1591.50px;top:619.50px;font-size:11.5px;line-height:17px;color:#fff;letter-spacing:-0.470px;">Enabled</span>
<div class="b" style="left:1740px;top:613.0px;width:32px;height:31px;background:#ffa21d;border-radius:5px"></div>
<svg class="b" style="left:1748.80px;top:621.60px" width="14.2" height="14.2" viewBox="0 0 24 24" fill="none" stroke="#fff" stroke-width="2.3" stroke-linecap="round" stroke-linejoin="round"><path d="M21 12h-2c-.894 0 -1.662 -.857 -1.761 -2c-.296 -3.45 -.749 -6 -2.749 -6s-2.5 3.582 -2.5 8s-.5 8 -2.5 8s-2.452 -2.547 -2.749 -6c-.1 -1.147 -.867 -2 -1.763 -2h-2"/></svg>
<div class="b" style="left:1781px;top:613.0px;width:32px;height:31px;background:#3ec9d6;border-radius:5px"></div>
<svg class="b" style="left:1789.90px;top:622.00px" width="14.2" height="14.2" viewBox="0 0 24 24" fill="none" stroke="#fff" stroke-width="2.3" stroke-linecap="round" stroke-linejoin="round"><path d="M9 7h-3a2 2 0 0 0 -2 2v9a2 2 0 0 0 2 2h9a2 2 0 0 0 2 -2v-3"/><path d="M9 15h3l8.5 -8.5a1.5 1.5 0 0 0 -3 -3l-8.5 8.5v3"/><path d="M16 5l3 3"/></svg>
<div class="b" style="left:1821px;top:613.0px;width:32px;height:31px;background:#ff3a6e;border-radius:5px"></div>
<svg class="b" style="left:1830.30px;top:621.80px" width="14" height="14" viewBox="0 0 24 24" fill="none" stroke="#fff" stroke-width="2.3" stroke-linecap="round" stroke-linejoin="round"><path d="M4 7l16 0"/><path d="M10 11l0 6"/><path d="M14 11l0 6"/><path d="M5 7l1 12a2 2 0 0 0 2 2h8a2 2 0 0 0 2 -2l1 -12"/><path d="M9 7v-3a1 1 0 0 1 1 -1h4a1 1 0 0 1 1 1v3"/></svg>
<div class="b" style="left:285px;top:654px;width:1605px;height:1px;background:#f1f1f1"></div>
<span class="t" style="left:310.50px;top:670.50px;font-size:14px;line-height:21px;color:#2c3442;letter-spacing:0.115px;">1510</span>
<a class="t" style="left:418.00px;top:670.50px;font-size:14px;line-height:21px;color:#6fd943;letter-spacing:0.551px;">Inventory</a>
<span class="t" style="left:869.60px;top:670.50px;font-size:14px;line-height:21px;color:#2c3442;letter-spacing:0.342px;">Inventory Asset</span>
<span class="t" style="left:1117.00px;top:670.50px;font-size:14px;line-height:21px;color:#2c3442;">-</span>
<span class="t" style="left:1438.00px;top:670.50px;font-size:14px;line-height:21px;color:#2c3442;">-</span>
<div class="b" style="left:1575px;top:667.0px;width:72px;height:26.5px;background:#6fd943;border-radius:2.5px"></div>
<span class="t" style="left:1591.50px;top:671.50px;font-size:11.5px;line-height:17px;color:#fff;letter-spacing:-0.470px;">Enabled</span>
<div class="b" style="left:1740px;top:665.0px;width:32px;height:31px;background:#ffa21d;border-radius:5px"></div>
<svg class="b" style="left:1748.80px;top:673.60px" width="14.2" height="14.2" viewBox="0 0 24 24" fill="none" stroke="#fff" stroke-width="2.3" stroke-linecap="round" stroke-linejoin="round"><path d="M21 12h-2c-.894 0 -1.662 -.857 -1.761 -2c-.296 -3.45 -.749 -6 -2.749 -6s-2.5 3.582 -2.5 8s-.5 8 -2.5 8s-2.452 -2.547 -2.749 -6c-.1 -1.147 -.867 -2 -1.763 -2h-2"/></svg>
<div class="b" style="left:1781px;top:665.0px;width:32px;height:31px;background:#3ec9d6;border-radius:5px"></div>
<svg class="b" style="left:1789.90px;top:674.00px" width="14.2" height="14.2" viewBox="0 0 24 24" fill="none" stroke="#fff" stroke-width="2.3" stroke-linecap="round" stroke-linejoin="round"><path d="M9 7h-3a2 2 0 0 0 -2 2v9a2 2 0 0 0 2 2h9a2 2 0 0 0 2 -2v-3"/><path d="M9 15h3l8.5 -8.5a1.5 1.5 0 0 0 -3 -3l-8.5 8.5v3"/><path d="M16 5l3 3"/></svg>
<div class="b" style="left:1821px;top:665.0px;width:32px;height:31px;background:#ff3a6e;border-radius:5px"></div>
<svg class="b" style="left:1830.30px;top:673.80px" width="14" height="14" viewBox="0 0 24 24" fill="none" stroke="#fff" stroke-width="2.3" stroke-linecap="round" stroke-linejoin="round"><path d="M4 7l16 0"/><path d="M10 11l0 6"/><path d="M14 11l0 6"/><path d="M5 7l1 12a2 2 0 0 0 2 2h8a2 2 0 0 0 2 -2l1 -12"/><path d="M9 7v-3a1 1 0 0 1 1 -1h4a1 1 0 0 1 1 1v3"/></svg>
<div class="b" style="left:285px;top:706px;width:1605px;height:1px;background:#f1f1f1"></div>
<span class="t" style="left:310.50px;top:722.50px;font-size:14px;line-height:21px;color:#2c3442;letter-spacing:0.115px;">1520</span>
<a class="t" style="left:418.00px;top:722.50px;font-size:14px;line-height:21px;color:#6fd943;letter-spacing:0.154px;">Stock of Raw Materials</a>
<span class="t" style="left:869.60px;top:722.50px;font-size:14px;line-height:21px;color:#2c3442;letter-spacing:0.342px;">Inventory Asset</span>
<span class="t" style="left:1117.00px;top:722.50px;font-size:14px;line-height:21px;color:#2c3442;">-</span>
<span class="t" style="left:1438.00px;top:722.50px;font-size:14px;line-height:21px;color:#2c3442;">-</span>
<div class="b" style="left:1575px;top:718.8px;width:72px;height:26.5px;background:#6fd943;border-radius:2.5px"></div>
<span class="t" style="left:1591.50px;top:723.50px;font-size:11.5px;line-height:17px;color:#fff;letter-spacing:-0.470px;">Enabled</span>
<div class="b" style="left:1740px;top:716.5px;width:32px;height:31px;background:#ffa21d;border-radius:5px"></div>
<svg class="b" style="left:1748.80px;top:725.10px" width="14.2" height="14.2" viewBox="0 0 24 24" fill="none" stroke="#fff" stroke-width="2.3" stroke-linecap="round" stroke-linejoin="round"><path d="M21 12h-2c-.894 0 -1.662 -.857 -1.761 -2c-.296 -3.45 -.749 -6 -2.749 -6s-2.5 3.582 -2.5 8s-.5 8 -2.5 8s-2.452 -2.547 -2.749 -6c-.1 -1.147 -.867 -2 -1.763 -2h-2"/></svg>
<div class="b" style="left:1781px;top:716.5px;width:32px;height:31px;background:#3ec9d6;border-radius:5px"></div>
<svg class="b" style="left:1789.90px;top:725.50px" width="14.2" height="14.2" viewBox="0 0 24 24" fill="none" stroke="#fff" stroke-width="2.3" stroke-linecap="round" stroke-linejoin="round"><path d="M9 7h-3a2 2 0 0 0 -2 2v9a2 2 0 0 0 2 2h9a2 2 0 0 0 2 -2v-3"/><path d="M9 15h3l8.5 -8.5a1.5 1.5 0 0 0 -3 -3l-8.5 8.5v3"/><path d="M16 5l3 3"/></svg>
<div class="b" style="left:1821px;top:716.5px;width:32px;height:31px;background:#ff3a6e;border-radius:5px"></div>
<svg class="b" style="left:1830.30px;top:725.30px" width="14" height="14" viewBox="0 0 24 24" fill="none" stroke="#fff" stroke-width="2.3" stroke-linecap="round" stroke-linejoin="round"><path d="M4 7l16 0"/><path d="M10 11l0 6"/><path d="M14 11l0 6"/><path d="M5 7l1 12a2 2 0 0 0 2 2h8a2 2 0 0 0 2 -2l1 -12"/><path d="M9 7v-3a1 1 0 0 1 1 -1h4a1 1 0 0 1 1 1v3"/></svg>
<div class="b" style="left:285px;top:758px;width:1605px;height:1px;background:#f1f1f1"></div>
<span class="t" style="left:310.50px;top:773.50px;font-size:14px;line-height:21px;color:#2c3442;letter-spacing:0.115px;">1530</span>
<a class="t" style="left:418.00px;top:773.50px;font-size:14px;line-height:21px;color:#6fd943;letter-spacing:0.164px;">Stock of Work In Progress</a>
<span class="t" style="left:869.60px;top:773.50px;font-size:14px;line-height:21px;color:#2c3442;letter-spacing:0.342px;">Inventory Asset</span>
<span class="t" style="left:1117.00px;top:773.50px;font-size:14px;line-height:21px;color:#2c3442;">-</span>
<span class="t" style="left:1438.00px;top:773.50px;font-size:14px;line-height:21px;color:#2c3442;">-</span>
<div class="b" style="left:1575px;top:770.6px;width:72px;height:26.5px;background:#6fd943;border-radius:2.5px"></div>
<span class="t" style="left:1591.50px;top:775.50px;font-size:11.5px;line-height:17px;color:#fff;letter-spacing:-0.470px;">Enabled</span>
<div class="b" style="left:1740px;top:768.5px;width:32px;height:31px;background:#ffa21d;border-radius:5px"></div>
<svg class="b" style="left:1748.80px;top:777.10px" width="14.2" height="14.2" viewBox="0 0 24 24" fill="none" stroke="#fff" stroke-width="2.3" stroke-linecap="round" stroke-linejoin="round"><path d="M21 12h-2c-.894 0 -1.662 -.857 -1.761 -2c-.296 -3.45 -.749 -6 -2.749 -6s-2.5 3.582 -2.5 8s-.5 8 -2.5 8s-2.452 -2.547 -2.749 -6c-.1 -1.147 -.867 -2 -1.763 -2h-2"/></svg>
<div class="b" style="left:1781px;top:768.5px;width:32px;height:31px;background:#3ec9d6;border-radius:5px"></div>
<svg class="b" style="left:1789.90px;top:777.50px" width="14.2" height="14.2" viewBox="0 0 24 24" fill="none" stroke="#fff" stroke-width="2.3" stroke-linecap="round" stroke-linejoin="round"><path d="M9 7h-3a2 2 0 0 0 -2 2v9a2 2 0 0 0 2 2h9a2 2 0 0 0 2 -2v-3"/><path d="M9 15h3l8.5 -8.5a1.5 1.5 0 0 0 -3 -3l-8.5 8.5v3"/><path d="M16 5l3 3"/></svg>
<div class="b" style="left:1821px;top:768.5px;width:32px;height:31px;background:#ff3a6e;border-radius:5px"></div>
<svg class="b" style="left:1830.30px;top:777.30px" width="14" height="14" viewBox="0 0 24 24" fill="none" stroke="#fff" stroke-width="2.3" stroke-linecap="round" stroke-linejoin="round"><path d="M4 7l16 0"/><path d="M10 11l0 6"/><path d="M14 11l0 6"/><path d="M5 7l1 12a2 2 0 0 0 2 2h8a2 2 0 0 0 2 -2l1 -12"/><path d="M9 7v-3a1 1 0 0 1 1 -1h4a1 1 0 0 1 1 1v3"/></svg>
<div class="b" style="left:285px;top:809px;width:1605px;height:1px;background:#f1f1f1"></div>
<span class="t" style="left:310.50px;top:825.50px;font-size:14px;line-height:21px;color:#2c3442;letter-spacing:0.115px;">1540</span>
<a class="t" style="left:418.00px;top:825.50px;font-size:14px;line-height:21px;color:#6fd943;letter-spacing:0.130px;">Stock of Finished Goods</a>
<span class="t" style="left:869.60px;top:825.50px;font-size:14px;line-height:21px;color:#2c3442;letter-spacing:0.342px;">Inventory Asset</span>
<span class="t" style="left:1117.00px;top:825.50px;font-size:14px;line-height:21px;color:#2c3442;">-</span>
<span class="t" style="left:1438.00px;top:825.50px;font-size:14px;line-height:21px;color:#2c3442;">-</span>
<div class="b" style="left:1575px;top:822.4px;width:72px;height:26.5px;background:#6fd943;border-radius:2.5px"></div>
<span class="t" style="left:1591.50px;top:827.50px;font-size:11.5px;line-height:17px;color:#fff;letter-spacing:-0.470px;">Enabled</span>
<div class="b" style="left:1740px;top:820.0px;width:32px;height:31px;background:#ffa21d;border-radius:5px"></div>
<svg class="b" style="left:1748.80px;top:828.60px" width="14.2" height="14.2" viewBox="0 0 24 24" fill="none" stroke="#fff" stroke-width="2.3" stroke-linecap="round" stroke-linejoin="round"><path d="M21 12h-2c-.894 0 -1.662 -.857 -1.761 -2c-.296 -3.45 -.749 -6 -2.749 -6s-2.5 3.582 -2.5 8s-.5 8 -2.5 8s-2.452 -2.547 -2.749 -6c-.1 -1.147 -.867 -2 -1.763 -2h-2"/></svg>
<div class="b" style="left:1781px;top:820.0px;width:32px;height:31px;background:#3ec9d6;border-radius:5px"></div>
<svg class="b" style="left:1789.90px;top:829.00px" width="14.2" height="14.2" viewBox="0 0 24 24" fill="none" stroke="#fff" stroke-width="2.3" stroke-linecap="round" stroke-linejoin="round"><path d="M9 7h-3a2 2 0 0 0 -2 2v9a2 2 0 0 0 2 2h9a2 2 0 0 0 2 -2v-3"/><path d="M9 15h3l8.5 -8.5a1.5 1.5 0 0 0 -3 -3l-8.5 8.5v3"/><path d="M16 5l3 3"/></svg>
<div class="b" style="left:1821px;top:820.0px;width:32px;height:31px;background:#ff3a6e;border-radius:5px"></div>
<svg class="b" style="left:1830.30px;top:828.80px" width="14" height="14" viewBox="0 0 24 24" fill="none" stroke="#fff" stroke-width="2.3" stroke-linecap="round" stroke-linejoin="round"><path d="M4 7l16 0"/><path d="M10 11l0 6"/><path d="M14 11l0 6"/><path d="M5 7l1 12a2 2 0 0 0 2 2h8a2 2 0 0 0 2 -2l1 -12"/><path d="M9 7v-3a1 1 0 0 1 1 -1h4a1 1 0 0 1 1 1v3"/></svg>
<div class="b" style="left:285px;top:861px;width:1605px;height:1px;background:#f1f1f1"></div>
<span class="t" style="left:310.50px;top:877.50px;font-size:14px;line-height:21px;color:#2c3442;letter-spacing:0.115px;">1550</span>
<a class="t" style="left:418.00px;top:877.50px;font-size:14px;line-height:21px;color:#6fd943;letter-spacing:0.118px;">Goods Received Clearing account</a>
<span class="t" style="left:869.60px;top:877.50px;font-size:14px;line-height:21px;color:#2c3442;letter-spacing:0.342px;">Inventory Asset</span>
<span class="t" style="left:1117.00px;top:877.50px;font-size:14px;line-height:21px;color:#2c3442;">-</span>
<span class="t" style="left:1438.00px;top:877.50px;font-size:14px;line-height:21px;color:#2c3442;">-</span>
<div class="b" style="left:1575px;top:874.2px;width:72px;height:26.5px;background:#6fd943;border-radius:2.5px"></div>
<span class="t" style="left:1591.50px;top:878.50px;font-size:11.5px;line-height:17px;color:#fff;letter-spacing:-0.470px;">Enabled</span>
<div class="b" style="left:1740px;top:872.0px;width:32px;height:31px;background:#ffa21d;border-radius:5px"></div>
<svg class="b" style="left:1748.80px;top:880.60px" width="14.2" height="14.2" viewBox="0 0 24 24" fill="none" stroke="#fff" stroke-width="2.3" stroke-linecap="round" stroke-linejoin="round"><path d="M21 12h-2c-.894 0 -1.662 -.857 -1.761 -2c-.296 -3.45 -.749 -6 -2.749 -6s-2.5 3.582 -2.5 8s-.5 8 -2.5 8s-2.452 -2.547 -2.749 -6c-.1 -1.147 -.867 -2 -1.763 -2h-2"/></svg>
<div class="b" style="left:1781px;top:872.0px;width:32px;height:31px;background:#3ec9d6;border-radius:5px"></div>
<svg class="b" style="left:1789.90px;top:881.00px" width="14.2" height="14.2" viewBox="0 0 24 24" fill="none" stroke="#fff" stroke-width="2.3" stroke-linecap="round" stroke-linejoin="round"><path d="M9 7h-3a2 2 0 0 0 -2 2v9a2 2 0 0 0 2 2h9a2 2 0 0 0 2 -2v-3"/><path d="M9 15h3l8.5 -8.5a1.5 1.5 0 0 0 -3 -3l-8.5 8.5v3"/><path d="M16 5l3 3"/></svg>
<div class="b" style="left:1821px;top:872.0px;width:32px;height:31px;background:#ff3a6e;border-radius:5px"></div>
<svg class="b" style="left:1830.30px;top:880.80px" width="14" height="14" viewBox="0 0 24 24" fill="none" stroke="#fff" stroke-width="2.3" stroke-linecap="round" stroke-linejoin="round"><path d="M4 7l16 0"/><path d="M10 11l0 6"/><path d="M14 11l0 6"/><path d="M5 7l1 12a2 2 0 0 0 2 2h8a2 2 0 0 0 2 -2l1 -12"/><path d="M9 7v-3a1 1 0 0 1 1 -1h4a1 1 0 0 1 1 1v3"/></svg>
<div class="b" style="left:285px;top:913px;width:1605px;height:1px;background:#f1f1f1"></div>
<span class="t" style="left:310.50px;top:929.50px;font-size:14px;line-height:21px;color:#2c3442;letter-spacing:0.115px;">1810</span>
<a class="t" style="left:418.00px;top:929.50px;font-size:14px;line-height:21px;color:#6fd943;letter-spacing:0.258px;">Land and Buildings</a>
<span class="t" style="left:869.60px;top:929.50px;font-size:14px;line-height:21px;color:#2c3442;letter-spacing:0.387px;">Non-current Asset</span>
<span class="t" style="left:1117.00px;top:929.50px;font-size:14px;line-height:21px;color:#2c3442;">-</span>
<span class="t" style="left:1438.00px;top:929.50px;font-size:14px;line-height:21px;color:#2c3442;">-</span>
<div class="b" style="left:1575px;top:926.0px;width:72px;height:26.5px;background:#6fd943;border-radius:2.5px"></div>
<span class="t" style="left:1591.50px;top:930.50px;font-size:11.5px;line-height:17px;color:#fff;letter-spacing:-0.470px;">Enabled</span>
<div class="b" style="left:1740px;top:924.0px;width:32px;height:31px;background:#ffa21d;border-radius:5px"></div>
<svg class="b" style="left:1748.80px;top:932.60px" width="14.2" height="14.2" viewBox="0 0 24 24" fill="none" stroke="#fff" stroke-width="2.3" stroke-linecap="round" stroke-linejoin="round"><path d="M21 12h-2c-.894 0 -1.662 -.857 -1.761 -2c-.296 -3.45 -.749 -6 -2.749 -6s-2.5 3.582 -2.5 8s-.5 8 -2.5 8s-2.452 -2.547 -2.749 -6c-.1 -1.147 -.867 -2 -1.763 -2h-2"/></svg>
<div class="b" style="left:1781px;top:924.0px;width:32px;height:31px;background:#3ec9d6;border-radius:5px"></div>
<svg class="b" style="left:1789.90px;top:933.00px" width="14.2" height="14.2" viewBox="0 0 24 24" fill="none" stroke="#fff" stroke-width="2.3" stroke-linecap="round" stroke-linejoin="round"><path d="M9 7h-3a2 2 0 0 0 -2 2v9a2 2 0 0 0 2 2h9a2 2 0 0 0 2 -2v-3"/><path d="M9 15h3l8.5 -8.5a1.5 1.5 0 0 0 -3 -3l-8.5 8.5v3"/><path d="M16 5l3 3"/></svg>
<div class="b" style="left:1821px;top:924.0px;width:32px;height:31px;background:#ff3a6e;border-radius:5px"></div>
<svg class="b" style="left:1830.30px;top:932.80px" width="14" height="14" viewBox="0 0 24 24" fill="none" stroke="#fff" stroke-width="2.3" stroke-linecap="round" stroke-linejoin="round"><path d="M4 7l16 0"/><path d="M10 11l0 6"/><path d="M14 11l0 6"/><path d="M5 7l1 12a2 2 0 0 0 2 2h8a2 2 0 0 0 2 -2l1 -12"/><path d="M9 7v-3a1 1 0 0 1 1 -1h4a1 1 0 0 1 1 1v3"/></svg>
<div class="b" style="left:285px;top:965px;width:1605px;height:1px;background:#f1f1f1"></div>
<span class="t" style="left:310.50px;top:981.50px;font-size:14px;line-height:21px;color:#2c3442;letter-spacing:0.115px;">1820</span>
<a class="t" style="left:418.00px;top:981.50px;font-size:14px;line-height:21px;color:#6fd943;letter-spacing:0.389px;">Office Furniture and Equipement</a>
<span class="t" style="left:869.60px;top:981.50px;font-size:14px;line-height:21px;color:#2c3442;letter-spacing:0.387px;">Non-current Asset</span>
<span class="t" style="left:1117.00px;top:981.50px;font-size:14px;line-height:21px;color:#2c3442;">-</span>
<span class="t" style="left:1438.00px;top:981.50px;font-size:14px;line-height:21px;color:#2c3442;">-</span>
<div class="b" style="left:1575px;top:977.8px;width:72px;height:26.5px;background:#6fd943;border-radius:2.5px"></div>
<span class="t" style="left:1591.50px;top:982.50px;font-size:11.5px;line-height:17px;color:#fff;letter-spacing:-0.470px;">Enabled</span>
<div class="b" style="left:1740px;top:975.5px;width:32px;height:31px;background:#ffa21d;border-radius:5px"></div>
<svg class="b" style="left:1748.80px;top:984.10px" width="14.2" height="14.2" viewBox="0 0 24 24" fill="none" stroke="#fff" stroke-width="2.3" stroke-linecap="round" stroke-linejoin="round"><path d="M21 12h-2c-.894 0 -1.662 -.857 -1.761 -2c-.296 -3.45 -.749 -6 -2.749 -6s-2.5 3.582 -2.5 8s-.5 8 -2.5 8s-2.452 -2.547 -2.749 -6c-.1 -1.147 -.867 -2 -1.763 -2h-2"/></svg>
<div class="b" style="left:1781px;top:975.5px;width:32px;height:31px;background:#3ec9d6;border-radius:5px"></div>
<svg class="b" style="left:1789.90px;top:984.50px" width="14.2" height="14.2" viewBox="0 0 24 24" fill="none" stroke="#fff" stroke-width="2.3" stroke-linecap="round" stroke-linejoin="round"><path d="M9 7h-3a2 2 0 0 0 -2 2v9a2 2 0 0 0 2 2h9a2 2 0 0 0 2 -2v-3"/><path d="M9 15h3l8.5 -8.5a1.5 1.5 0 0 0 -3 -3l-8.5 8.5v3"/><path d="M16 5l3 3"/></svg>
<div class="b" style="left:1821px;top:975.5px;width:32px;height:31px;background:#ff3a6e;border-radius:5px"></div>
<svg class="b" style="left:1830.30px;top:984.30px" width="14" height="14" viewBox="0 0 24 24" fill="none" stroke="#fff" stroke-width="2.3" stroke-linecap="round" stroke-linejoin="round"><path d="M4 7l16 0"/><path d="M10 11l0 6"/><path d="M14 11l0 6"/><path d="M5 7l1 12a2 2 0 0 0 2 2h8a2 2 0 0 0 2 -2l1 -12"/><path d="M9 7v-3a1 1 0 0 1 1 -1h4a1 1 0 0 1 1 1v3"/></svg>
<div class="b" style="left:285px;top:1017px;width:1605px;height:1px;background:#f1f1f1"></div>
<span class="t" style="left:310.50px;top:1033.50px;font-size:14px;line-height:21px;color:#2c3442;letter-spacing:0.115px;">1825</span>
<a class="t" style="left:418.00px;top:1033.50px;font-size:14px;line-height:21px;color:#6fd943;letter-spacing:0.281px;">Accum.depreciation-Furn. and Equip</a>
<span class="t" style="left:869.60px;top:1033.50px;font-size:14px;line-height:21px;color:#2c3442;letter-spacing:0.387px;">Non-current Asset</span>
<span class="t" style="left:1117.00px;top:1033.50px;font-size:14px;line-height:21px;color:#2c3442;">-</span>
<span class="t" style="left:1438.00px;top:1033.50px;font-size:14px;line-height:21px;color:#2c3442;">-</span>
<div class="b" style="left:1575px;top:1029.6px;width:72px;height:26.5px;background:#6fd943;border-radius:2.5px"></div>
<span class="t" style="left:1591.50px;top:1034.50px;font-size:11.5px;line-height:17px;color:#fff;letter-spacing:-0.470px;">Enabled</span>
<div class="b" style="left:1740px;top:1027.5px;width:32px;height:31px;background:#ffa21d;border-radius:5px"></div>
<svg class="b" style="left:1748.80px;top:1036.10px" width="14.2" height="14.2" viewBox="0 0 24 24" fill="none" stroke="#fff" stroke-width="2.3" stroke-linecap="round" stroke-linejoin="round"><path d="M21 12h-2c-.894 0 -1.662 -.857 -1.761 -2c-.296 -3.45 -.749 -6 -2.749 -6s-2.5 3.582 -2.5 8s-.5 8 -2.5 8s-2.452 -2.547 -2.749 -6c-.1 -1.147 -.867 -2 -1.763 -2h-2"/></svg>
<div class="b" style="left:1781px;top:1027.5px;width:32px;height:31px;background:#3ec9d6;border-radius:5px"></div>
<svg class="b" style="left:1789.90px;top:1036.50px" width="14.2" height="14.2" viewBox="0 0 24 24" fill="none" stroke="#fff" stroke-width="2.3" stroke-linecap="round" stroke-linejoin="round"><path d="M9 7h-3a2 2 0 0 0 -2 2v9a2 2 0 0 0 2 2h9a2 2 0 0 0 2 -2v-3"/><path d="M9 15h3l8.5 -8.5a1.5 1.5 0 0 0 -3 -3l-8.5 8.5v3"/><path d="M16 5l3 3"/></svg>
<div class="b" style="left:1821px;top:1027.5px;width:32px;height:31px;background:#ff3a6e;border-radius:5px"></div>
<svg class="b" style="left:1830.30px;top:1036.30px" width="14" height="14" viewBox="0 0 24 24" fill="none" stroke="#fff" stroke-width="2.3" stroke-linecap="round" stroke-linejoin="round"><path d="M4 7l16 0"/><path d="M10 11l0 6"/><path d="M14 11l0 6"/><path d="M5 7l1 12a2 2 0 0 0 2 2h8a2 2 0 0 0 2 -2l1 -12"/><path d="M9 7v-3a1 1 0 0 1 1 -1h4a1 1 0 0 1 1 1v3"/></svg>
<div class="b" style="left:285px;top:1068px;width:1605px;height:1px;background:#f1f1f1"></div>
</section></main>
</body></html>
